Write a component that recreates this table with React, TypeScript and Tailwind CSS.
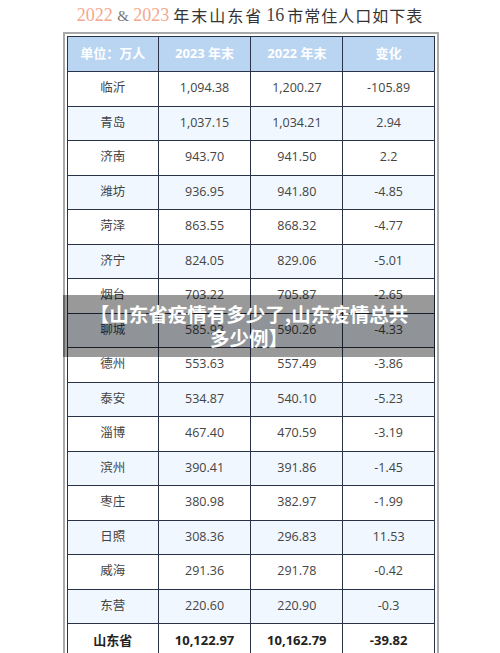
import React from "react";

const rows = [
    ["临沂", "1,094.38", "1,200.27", "-105.89"],
    ["青岛", "1,037.15", "1,034.21", "2.94"],
    ["济南", "943.70", "941.50", "2.2"],
    ["潍坊", "936.95", "941.80", "-4.85"],
    ["菏泽", "863.55", "868.32", "-4.77"],
    ["济宁", "824.05", "829.06", "-5.01"],
    ["烟台", "703.22", "705.87", "-2.65"],
    ["聊城", "585.93", "590.26", "-4.33"],
    ["德州", "553.63", "557.49", "-3.86"],
    ["泰安", "534.87", "540.10", "-5.23"],
    ["淄博", "467.40", "470.59", "-3.19"],
    ["滨州", "390.41", "391.86", "-1.45"],
    ["枣庄", "380.98", "382.97", "-1.99"],
    ["日照", "308.36", "296.83", "11.53"],
    ["威海", "291.36", "291.78", "-0.42"],
    ["东营", "220.60", "220.90", "-0.3"],
];

const headers = ["单位：万人", "2023 年末", "2022 年末", "变化"];
const widths = ["w-[91px]", "w-[93px]", "w-[92px]", "w-[92px]"];

export default function App() {
    return (
        <main className="relative w-[500px] h-[653px] overflow-hidden bg-white font-['Open_Sans','Noto_Sans_CJK_SC',sans-serif]">
            {/* Title */}
            <div className="h-[32px] flex items-center justify-center pb-[2px] text-[18px] leading-none">
                <span className="font-['Liberation_Serif',serif] text-[#f4a88e]">
                    2022 <span className="text-[15px] text-[#777]">&amp;</span> 2023
                </span>
                <span className="ml-[4px] font-['Noto_Sans_CJK_SC',sans-serif] text-[16px] tracking-[2px] text-[#333]">
                    年末山东省
                </span>
                <span className="mx-[3px] font-['Liberation_Serif',serif] text-[#444]">16</span>
                <span className="font-['Noto_Sans_CJK_SC',sans-serif] text-[16px] tracking-[1px] text-[#333]">
                    市常住人口如下表
                </span>
            </div>

            {/* Table frame */}
            <div className="ml-[63px] w-[376px] border-2 border-b-0 border-[#a9a9a9] p-[2px] pb-0">
                <table className="w-[368px] border-collapse text-center text-[12.5px] text-[#444]">
                    <thead>
                        <tr className="h-[35px] bg-[#b9d5f2]">
                            {headers.map((h, i) => (
                                <th
                                    key={h}
                                    className={`${widths[i]} border border-[#2a3248] font-bold text-[13px] text-white`}
                                >
                                    {h}
                                </th>
                            ))}
                        </tr>
                    </thead>
                    <tbody>
                        {rows.map((r, i) => (
                            <tr
                                key={r[0]}
                                className={`h-[34.5px] ${i % 2 === 1 ? "bg-[#f0f7fe]" : "bg-white"}`}
                            >
                                {r.map((c, j) => (
                                    <td key={j} className="border border-[#2a3248]">
                                        {c}
                                    </td>
                                ))}
                            </tr>
                        ))}
                        <tr className="h-[34.5px] bg-white font-bold text-[#222]">
                            {["山东省", "10,122.97", "10,162.79", "-39.82"].map((c) => (
                                <td key={c} className="border border-[#2a3248] text-[13px]">
                                    {c}
                                </td>
                            ))}
                        </tr>
                    </tbody>
                </table>
            </div>

            {/* Caption overlay */}
            <div className="absolute left-[63px] top-[295px] w-[372px] h-[62px] bg-black/40 flex items-center justify-center">
                <p className="whitespace-nowrap text-center text-white font-bold text-[19.5px] leading-[24px] font-['Noto_Sans_CJK_SC',sans-serif]">
                    【山东省疫情有多少了,山东疫情总共
                    <br />
                    多少例】
                </p>
            </div>
        </main>
    );
}
